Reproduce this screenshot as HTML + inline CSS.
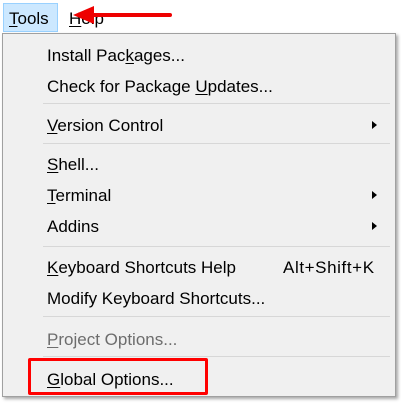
<!DOCTYPE html>
<html><head><meta charset="utf-8"><style>
body{margin:0;width:401px;height:403px;background:#fff;position:relative;overflow:hidden;font-family:"Segoe UI","Liberation Sans",sans-serif;color:#000}
.t{position:absolute;font-size:17px;line-height:20px;white-space:nowrap}
.menu{position:absolute;left:2px;top:33px;width:392px;height:362px;background:#f0f0f0;border:1px solid #a0a0a0;box-shadow:2px 2px 3px rgba(0,0,0,.35)}
.sep{position:absolute;left:43px;width:347px;height:1px;background:#d7d7d7}
.arr{position:absolute;left:372px;width:0;height:0;border-top:4px solid transparent;border-bottom:4px solid transparent;border-left:5px solid #000}
u{text-decoration:underline;text-underline-offset:2px}
</style></head><body>
<div style="position:absolute;left:3px;top:3px;width:55px;height:29px;background:#cce8ff;border:1px solid #99d1ff;box-sizing:border-box"></div>
<div class="t" style="left:9px;top:9px"><u>T</u>ools</div>
<div class="t" style="left:69px;top:9px"><u>H</u>elp</div>
<svg style="position:absolute;left:70px;top:2px" width="105" height="24"><line x1="100" y1="13" x2="14" y2="13" stroke="#e00" stroke-width="4" stroke-linecap="round"/><polygon points="3,13 24,4 24,22" fill="#e00"/></svg>
<div class="menu"></div>
<div class="t" style="left:47px;top:46px">Install Pac<u>k</u>ages...</div>
<div class="t" style="left:47px;top:77px">Check for Package <u>U</u>pdates...</div>
<div class="sep" style="top:103px"></div>
<div class="t" style="left:47px;top:116px"><u>V</u>ersion Control</div>
<div class="arr" style="top:121px"></div>
<div class="sep" style="top:143px"></div>
<div class="t" style="left:47px;top:155px"><u>S</u>hell...</div>
<div class="t" style="left:47px;top:186px"><u>T</u>erminal</div>
<div class="arr" style="top:191px"></div>
<div class="t" style="left:47px;top:217px">Addins</div>
<div class="arr" style="top:222px"></div>
<div class="sep" style="top:246px"></div>
<div class="t" style="left:47px;top:258px"><u>K</u>eyboard Shortcuts Help</div>
<div class="t" style="left:283px;top:258px;letter-spacing:0.6px">Alt+Shift+K</div>
<div class="t" style="left:47px;top:289px">Modify Keyboard Shortcuts...</div>
<div class="sep" style="top:316px"></div>
<div class="t" style="left:47px;top:330px;color:#6d6d6d"><u>P</u>roject Options...</div>
<div class="sep" style="top:356px"></div>
<div class="t" style="left:47px;top:370px"><u>G</u>lobal Options...</div>
<div style="position:absolute;left:28px;top:358px;width:180px;height:37px;border:3.5px solid #f00;border-radius:2px;box-sizing:border-box"></div>
</body></html>
